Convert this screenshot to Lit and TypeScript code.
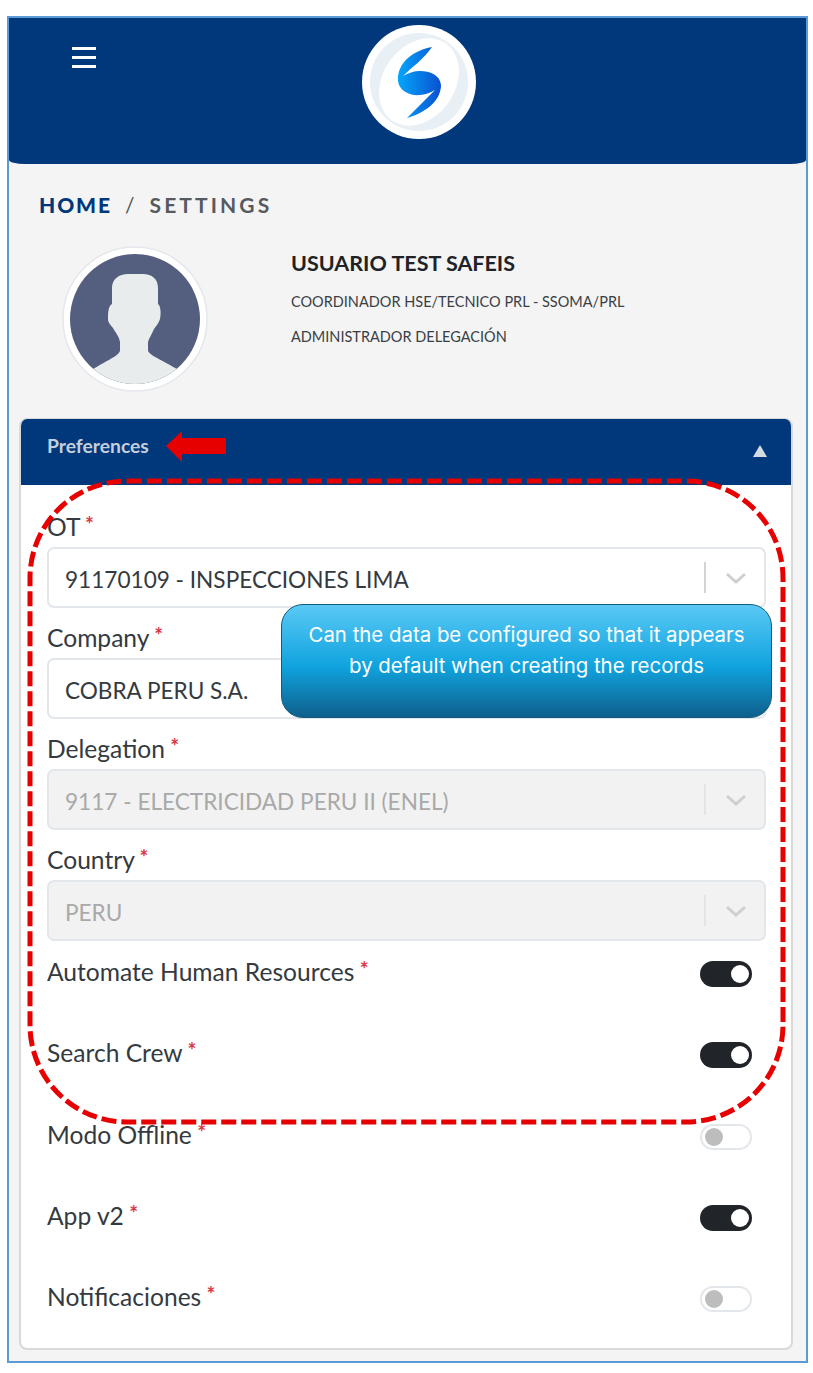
import { LitElement, html, css, svg } from "lit";
import { customElement } from "lit/decorators.js";

const chevron = html`<svg class="chev" width="22" height="12" viewBox="0 0 22 12"><path d="M2 2l9 8 9-8" fill="none" stroke="#cfcfcf" stroke-width="3"/></svg>`;

@customElement("app-root")
export class AppRoot extends LitElement {
  static styles = css`
    :host { display: block; position: relative; width: 813px; height: 1373px; background: #fff; font-family: "Lato", "Noto Sans", sans-serif; color: #343a40; padding: 16px 5px 0 7px; box-sizing: border-box; overflow: hidden; }
    .frame { box-sizing: border-box; width: 801px; height: 1347px; border: 2px solid #5b9bd5; background: #f4f4f4; }
    .top { height: 146px; background: #00387b; border-radius: 0 0 16px 16px / 0 0 4px 4px; position: relative; display: flex; justify-content: center; }
    .burger { position: absolute; left: 63px; top: 29px; width: 24px; display: flex; flex-direction: column; gap: 6px; }
    .burger i { display: block; height: 3px; background: #fff; }
    .logo { margin-top: 6px; margin-left: 23px; width: 116px; height: 116px; }
    .crumb { padding: 26px 0 0 30px; height: 29px; font-size: 21px; line-height: 29px; font-weight: 700; letter-spacing: 3.1px; color: #555a60; display: flex; }
    .crumb b { color: #00387b; font-weight: 900; letter-spacing: 1.9px; }
    .crumb span { margin: 0 12px 0 13px; font-weight: 400; }
    .profile { display: flex; margin-top: 27px; height: 172px; }
    .avatar { margin-left: 53px; width: 146px; height: 146px; }
    .who { margin-left: 83px; padding-top: 3px; }
    .name { font-size: 21.5px; line-height: 28px; font-weight: 700; color: #1f2327; }
    .role { font-size: 14.5px; line-height: 20px; margin-top: 15px; color: #3a3f45; }
    .card { margin: 0 13px 0 10px; height: 932px; box-sizing: border-box; border: 2px solid #d9d9d9; border-top-width: 1px; border-radius: 8px; background: #fff; overflow: hidden; }
    .head { height: 66px; background: #00387b; display: flex; justify-content: space-between; align-items: center; padding: 0 24px 13px 26px; box-sizing: border-box; color: #c5cfdc; font-weight: 700; font-size: 19.3px; }
    .tri { width: 0; height: 0; border: 7.5px solid transparent; border-top: 0; border-bottom: 12px solid #d5dbe2; margin-top: 10px; }
    .body { padding: 27px 25px 0 26px; }
    .field { height: 111px; }
    label { display: block; font-size: 24.6px; line-height: 24px; height: 35px; }
    label em { color: #dc3545; font-style: normal; font-weight: 700; font-size: 21px; vertical-align: 4px; margin-left: -1px; }
    .sel { box-sizing: border-box; height: 61px; border: 2px solid #e3e6ea; border-radius: 7px; display: flex; align-items: center; padding: 0 17px 0 16px; font-size: 22.6px; color: #343a40; background: #fff; }
    .sel .t { flex: 1; padding-top: 3px; }
    .sel.off { background: #f2f2f2; color: #a9a9a9; }
    .sep { width: 2px; height: 31px; background: #d4d4d4; margin-right: 19px; }
    .sel.off .sep { background: #e4e4e4; }
    .row { display: flex; justify-content: space-between; height: 81.3px; padding-right: 14px; box-sizing: border-box; }
    .row label { height: auto; margin-top: 1px; }
    .sw { box-sizing: border-box; margin-top: 5px; width: 52px; height: 26px; border-radius: 13px; background: #212529; position: relative; }
    .sw::after { content: ""; position: absolute; right: 3px; top: 4px; width: 18px; height: 18px; border-radius: 50%; background: #fff; }
    .sw.no { background: #fff; border: 2px solid #e3e6ea; }
    .sw.no::after { left: 3px; top: 2px; right: auto; background: #bdbdbd; }
    .dash { position: absolute; left: 0; top: 0; pointer-events: none; }
    .call { position: absolute; left: 281px; top: 604px; width: 491px; height: 114px; box-sizing: border-box; border: 1.5px solid #145a7c; border-radius: 22px; background: linear-gradient(#5ac9f6 0%, #10a3de 55%, #0e5f8c 100%); color: #fff; text-align: center; font-family: "Inter", sans-serif; font-size: 20.4px; line-height: 31px; padding-top: 14px; }
  `;

  private field(name: string, value: string, off = false) {
    return html`<div class="field"><label>${name} <em>*</em></label>
      <div class="sel ${off ? "off" : ""}"><span class="t">${value}</span><span class="sep"></span>${chevron}</div></div>`;
  }
  private row(name: string, on: boolean) {
    return html`<div class="row"><label>${name} <em>*</em></label><div class="sw ${on ? "" : "no"}"></div></div>`;
  }

  render() {
    return html`
      <div class="frame">
        <div class="top">
          <div class="burger"><i></i><i></i><i></i></div>
          <svg class="logo" viewBox="0 0 116 116">
            <defs><linearGradient id="g" x1="0" x2="1" y1="0" y2="0"><stop offset="0" stop-color="#05a6fb"/><stop offset="1" stop-color="#0a50cf"/></linearGradient></defs>
            <circle cx="58" cy="58" r="57" fill="#fff"/>
            <circle cx="58" cy="58" r="49" fill="#e8eff5"/>
            <ellipse cx="58" cy="58" rx="36" ry="47" transform="rotate(35 58 58)" fill="#fff"/>
            <path transform="translate(-361 -23)" fill="url(#g)" d="M432 46C412 50 397 62 398 80C399 90 410 95 420 94C425 93.5 430 92 435 89L407 117C425 112 441 100 441 84C440 74 430 70 420 70C414 70 408 72 403 75C412 66 424 58 432 46Z"/>
          </svg>
        </div>
        <div class="crumb"><b>HOME</b><span>/</span>SETTINGS</div>
        <div class="profile">
          <svg class="avatar" viewBox="0 0 146 146">
            <defs><clipPath id="c"><circle cx="73" cy="73" r="65"/></clipPath></defs>
            <circle cx="73" cy="73" r="72" fill="#fff" stroke="#e4e8ec" stroke-width="1.5"/>
            <circle cx="73" cy="73" r="65" fill="#545e7e"/>
            <path clip-path="url(#c)" fill="#e8eced" d="M50 42C50 33 57 28 66 28H81C90 28 96 33 96 42V58C99 60 99 68 98 73C97 77 94 80 92 83C90 88 87 92 86 96V104C86 108 92 110 115 123L120 146H26L31 123C54 110 58 108 58 104V96C57 90 53 86 51 82C49 79 46 77 46 73C46 68 46 60 50 58Z"/>
          </svg>
          <div class="who">
            <div class="name">USUARIO TEST SAFEIS</div>
            <div class="role">COORDINADOR HSE/TECNICO PRL - SSOMA/PRL</div>
            <div class="role">ADMINISTRADOR DELEGACIÓN</div>
          </div>
        </div>
        <div class="card">
          <div class="head"><span>Preferences</span><span class="tri"></span></div>
          <div class="body">
            ${this.field("OT", "91170109 - INSPECCIONES LIMA")}
            ${this.field("Company", "COBRA PERU S.A.")}
            ${this.field("Delegation", "9117 - ELECTRICIDAD PERU II (ENEL)", true)}
            ${this.field("Country", "PERU", true)}
            ${this.row("Automate Human Resources", true)}
            ${this.row("Search Crew", true)}
            ${this.row("Modo Offline", false)}
            ${this.row("App v2", true)}
            ${this.row("Notificaciones", false)}
          </div>
        </div>
      </div>
      <svg class="dash" width="813" height="1373">
        ${svg`<rect x="30" y="481" width="753" height="641" rx="97" ry="97" fill="none" stroke="#e60000" stroke-width="5" stroke-dasharray="15 5"/>
        <path d="M166 446L182 431V438H226V454H182V462Z" fill="#e60000"/>`}
      </svg>
      <div class="call">Can the data be configured so that it appears<br>by default when creating the records</div>
    `;
  }
}
